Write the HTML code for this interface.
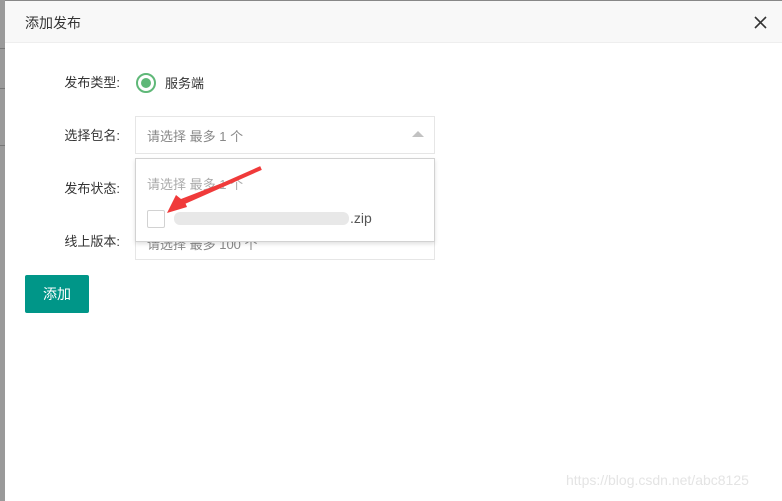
<!DOCTYPE html>
<html><head><meta charset="utf-8"><style>
body{margin:0;width:782px;height:501px;position:relative;overflow:hidden;background:#fff;font-family:"Liberation Sans","Noto Sans CJK SC",sans-serif;font-size:13px;color:#333}
.a{position:absolute}
.lbl{position:absolute;width:90px;left:30px;text-align:right;font-size:13px;color:#333}
.sel{position:absolute;left:135px;width:298px;height:36px;border:1px solid #e6e6e6;background:#fff;box-sizing:content-box}
.ph{position:absolute;left:11px;top:9px;color:#888;font-size:13px}
</style></head><body>
<div class="a" style="left:0;top:0;width:782px;height:1px;background:#888"></div>
<div class="a" style="left:0;top:0;width:5px;height:501px;background:#9a9a9a"></div>
<div class="a" style="left:0;top:48px;width:5px;height:1px;background:#777"></div>
<div class="a" style="left:0;top:88px;width:5px;height:1px;background:#777"></div>
<div class="a" style="left:0;top:145px;width:5px;height:1px;background:#777"></div>
<div class="a" style="left:5px;top:1px;width:777px;height:41px;background:#f8f8f8;border-bottom:1px solid #eee"></div>
<div class="a" style="left:25px;top:13px;font-size:14px;color:#333">添加发布</div>
<svg class="a" style="left:754px;top:16px" width="13" height="13" viewBox="0 0 13 13"><path d="M1 1L12 12M12 1L1 12" stroke="#333" stroke-width="1.6"/></svg>

<div class="lbl" style="top:72px">发布类型:</div>
<div class="a" style="left:136px;top:73px;width:20px;height:20px;border:2px solid #5FB878;border-radius:50%;box-sizing:border-box"></div>
<div class="a" style="left:141px;top:78px;width:10px;height:10px;background:#5FB878;border-radius:50%"></div>
<div class="a" style="left:165px;top:73px">服务端</div>

<div class="lbl" style="top:125px">选择包名:</div>
<div class="sel" style="top:116px"><span class="ph">请选择 最多 1 个</span>
<div class="a" style="right:10px;top:14px;width:0;height:0;border-left:6px solid transparent;border-right:6px solid transparent;border-bottom:6px solid #c2c2c2"></div></div>

<div class="lbl" style="top:178px">发布状态:</div>
<div class="lbl" style="top:231px">线上版本:</div>
<div class="sel" style="top:222px"><span class="ph" style="top:11px">请选择 最多 100 个</span></div>

<div class="a" style="left:135px;top:158px;width:298px;height:82px;border:1px solid #d2d2d2;background:#fff;box-shadow:0 2px 4px rgba(0,0,0,.12)">
<span class="a" style="left:11px;top:15px;color:#aaa">请选择 最多 1 个</span>
<div class="a" style="left:11px;top:51px;width:16px;height:16px;border:1px solid #d2d2d2;border-radius:2px"></div>
<div class="a" style="left:38px;top:53px;width:175px;height:13px;background:#e8e8e8;border-radius:6px"></div>
<span class="a" style="left:214px;top:51px;color:#555;font-size:14px">.zip</span>
</div>
<svg class="a" style="left:160px;top:165px" width="105" height="50"><path d="M101 3L24 35L27 42L7 48L16 30L21 34Z" fill="#f03a3a"/><path d="M101 3L22 38" stroke="#f03a3a" stroke-width="4"/></svg>

<div class="a" style="left:25px;top:275px;width:64px;height:38px;background:#009688;border-radius:2px;color:#fff;font-size:14px;line-height:38px;text-align:center">添加</div>
<div class="a" style="left:566px;top:472px;color:#e4e4e4;font-size:14px">https://blog.csdn.net/abc8125</div>
</body></html>
